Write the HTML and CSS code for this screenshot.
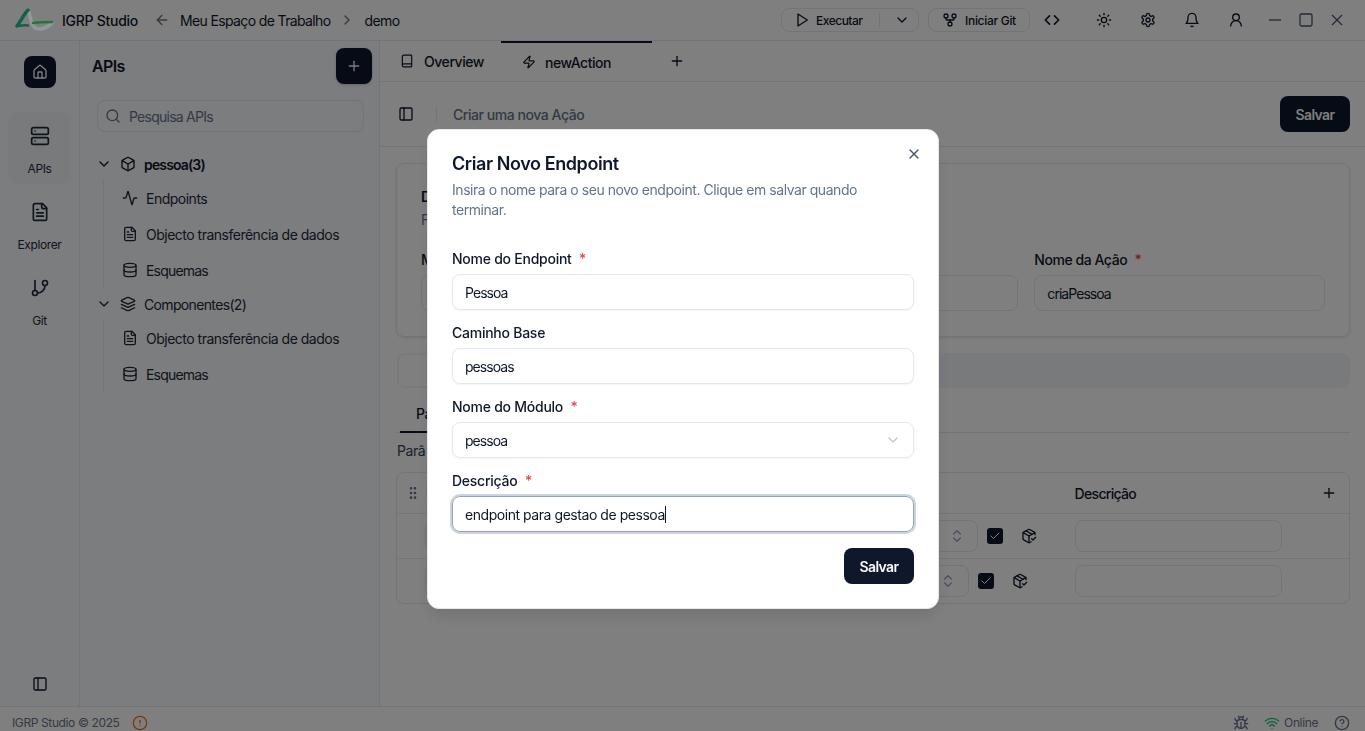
FILE: index.html
```html
<!DOCTYPE html>
<html lang="pt">
<head>
  <meta charset="UTF-8">
  <title>IGRP Studio</title>
  <link rel="stylesheet" href="styles.css">
</head>
<body>
  <svg class="sprite" xmlns="http://www.w3.org/2000/svg">
    <symbol id="i-house" viewBox="0 0 24 24"><path d="M15 21v-8a1 1 0 0 0-1-1h-4a1 1 0 0 0-1 1v8"/><path d="M3 10a2 2 0 0 1 .709-1.528l7-5.999a2 2 0 0 1 2.582 0l7 5.999A2 2 0 0 1 21 10v9a2 2 0 0 1-2 2H5a2 2 0 0 1-2-2z"/></symbol>
    <symbol id="i-server" viewBox="0 0 24 24"><rect x="2" y="2" width="20" height="8" rx="2"/><rect x="2" y="14" width="20" height="8" rx="2"/><path d="M6 6h.01"/><path d="M6 18h.01"/></symbol>
    <symbol id="i-file" viewBox="0 0 24 24"><path d="M15 2H6a2 2 0 0 0-2 2v16a2 2 0 0 0 2 2h12a2 2 0 0 0 2-2V7Z"/><path d="M14 2v4a2 2 0 0 0 2 2h4"/><path d="M10 9H8"/><path d="M16 13H8"/><path d="M16 17H8"/></symbol>
    <symbol id="i-branch" viewBox="0 0 24 24"><path d="M6 3v12"/><circle cx="18" cy="6" r="3"/><circle cx="6" cy="18" r="3"/><path d="M18 9a9 9 0 0 1-9 9"/></symbol>
    <symbol id="i-panel" viewBox="0 0 24 24"><rect x="3" y="3" width="18" height="18" rx="2"/><path d="M9 3v18"/></symbol>
    <symbol id="i-box" viewBox="0 0 24 24"><path d="M21 8a2 2 0 0 0-1-1.73l-7-4a2 2 0 0 0-2 0l-7 4A2 2 0 0 0 3 8v8a2 2 0 0 0 1 1.73l7 4a2 2 0 0 0 2 0l7-4A2 2 0 0 0 21 16Z"/><path d="m3.3 7 8.7 5 8.7-5"/><path d="M12 22V12"/></symbol>
    <symbol id="i-layers" viewBox="0 0 24 24"><path d="m12.83 2.18a2 2 0 0 0-1.66 0L2.6 6.08a1 1 0 0 0 0 1.83l8.58 3.91a2 2 0 0 0 1.66 0l8.58-3.9a1 1 0 0 0 0-1.83Z"/><path d="m22 17.65-9.17 4.16a2 2 0 0 1-1.66 0L2 17.65"/><path d="m22 12.65-9.17 4.16a2 2 0 0 1-1.66 0L2 12.65"/></symbol>
    <symbol id="i-activity" viewBox="0 0 24 24"><path d="M22 12h-2.48a2 2 0 0 0-1.93 1.46l-2.35 8.36a.25.25 0 0 1-.48 0L9.24 2.18a.25.25 0 0 0-.48 0l-2.35 8.36A2 2 0 0 1 4.49 12H2"/></symbol>
    <symbol id="i-database" viewBox="0 0 24 24"><ellipse cx="12" cy="5" rx="9" ry="3"/><path d="M3 5V19A9 3 0 0 0 21 19V5"/><path d="M3 12A9 3 0 0 0 21 12"/></symbol>
    <symbol id="i-search" viewBox="0 0 24 24"><circle cx="11" cy="11" r="8"/><path d="m21 21-4.3-4.3"/></symbol>
    <symbol id="i-down" viewBox="0 0 24 24"><path d="m6 9 6 6 6-6"/></symbol>
    <symbol id="i-right" viewBox="0 0 24 24"><path d="m9 18 6-6-6-6"/></symbol>
    <symbol id="i-back" viewBox="0 0 24 24"><path d="m12 19-7-7 7-7"/><path d="M19 12H5"/></symbol>
    <symbol id="i-plus" viewBox="0 0 24 24"><path d="M5 12h14"/><path d="M12 5v14"/></symbol>
    <symbol id="i-x" viewBox="0 0 24 24"><path d="M18 6 6 18"/><path d="m6 6 12 12"/></symbol>
    <symbol id="i-play" viewBox="0 0 24 24"><path d="M6 3 20 12 6 21Z"/></symbol>
    <symbol id="i-fork" viewBox="0 0 24 24"><circle cx="12" cy="18" r="3"/><circle cx="6" cy="6" r="3"/><circle cx="18" cy="6" r="3"/><path d="M18 9v2c0 .6-.4 1-1 1H7c-.6 0-1-.4-1-1V9"/><path d="M12 12v3"/></symbol>
    <symbol id="i-code" viewBox="0 0 24 24"><path d="m9 7-5 5 5 5"/><path d="m15 7 5 5-5 5"/></symbol>
    <symbol id="i-sun" viewBox="0 0 24 24"><circle cx="12" cy="12" r="4"/><path d="M12 2v2"/><path d="M12 20v2"/><path d="m4.93 4.93 1.41 1.41"/><path d="m17.66 17.66 1.41 1.41"/><path d="M2 12h2"/><path d="M20 12h2"/><path d="m6.34 17.66-1.41 1.41"/><path d="m19.07 4.93-1.41 1.41"/></symbol>
    <symbol id="i-gear" viewBox="0 0 24 24"><path d="M12.22 2h-.44a2 2 0 0 0-2 2v.18a2 2 0 0 1-1 1.73l-.43.25a2 2 0 0 1-2 0l-.15-.08a2 2 0 0 0-2.73.73l-.22.38a2 2 0 0 0 .73 2.73l.15.1a2 2 0 0 1 1 1.72v.51a2 2 0 0 1-1 1.74l-.15.09a2 2 0 0 0-.73 2.73l.22.38a2 2 0 0 0 2.73.73l.15-.08a2 2 0 0 1 2 0l.43.25a2 2 0 0 1 1 1.73V20a2 2 0 0 0 2 2h.44a2 2 0 0 0 2-2v-.18a2 2 0 0 1 1-1.73l.43-.25a2 2 0 0 1 2 0l.15.08a2 2 0 0 0 2.73-.73l.22-.39a2 2 0 0 0-.73-2.73l-.15-.08a2 2 0 0 1-1-1.74v-.5a2 2 0 0 1 1-1.74l.15-.09a2 2 0 0 0 .73-2.73l-.22-.38a2 2 0 0 0-2.73-.73l-.15.08a2 2 0 0 1-2 0l-.43-.25a2 2 0 0 1-1-1.73V4a2 2 0 0 0-2-2z"/><circle cx="12" cy="12" r="3"/></symbol>
    <symbol id="i-bell" viewBox="0 0 24 24"><path d="M6 8a6 6 0 0 1 12 0c0 7 3 9 3 9H3s3-2 3-9"/><path d="M10.3 21a1.94 1.94 0 0 0 3.4 0"/></symbol>
    <symbol id="i-user" viewBox="0 0 24 24"><circle cx="12" cy="8" r="5"/><path d="M20 21a8 8 0 0 0-16 0"/></symbol>
    <symbol id="i-book" viewBox="0 0 24 24"><path d="M4 19.5v-15A2.5 2.5 0 0 1 6.5 2H19a1 1 0 0 1 1 1v18a1 1 0 0 1-1 1H6.5a1 1 0 0 1 0-5H20"/></symbol>
    <symbol id="i-zap" viewBox="0 0 24 24"><path d="M4 14a1 1 0 0 1-.78-1.63l9.9-10.2a.5.5 0 0 1 .86.46l-1.92 6.02A1 1 0 0 0 13 10h7a1 1 0 0 1 .78 1.63l-9.9 10.2a.5.5 0 0 1-.86-.46l1.92-6.02A1 1 0 0 0 11 14z"/></symbol>
    <symbol id="i-updown" viewBox="0 0 24 24"><path d="m7 15 5 5 5-5"/><path d="m7 9 5-5 5 5"/></symbol>
    <symbol id="i-package" viewBox="0 0 24 24"><path d="m16 16 2 2 4-4"/><path d="M21 10V8a2 2 0 0 0-1-1.73l-7-4a2 2 0 0 0-2 0l-7 4A2 2 0 0 0 3 8v8a2 2 0 0 0 1 1.73l7 4a2 2 0 0 0 2 0l2-1.14"/><path d="m7.5 4.27 9 5.15"/><path d="M3.29 7 12 12l8.71-5"/><path d="M12 22V12"/></symbol>
    <symbol id="i-check" viewBox="0 0 24 24"><path d="M20 6 9 17l-5-5"/></symbol>
    <symbol id="i-grip" viewBox="0 0 24 24"><circle cx="9" cy="12" r="1"/><circle cx="9" cy="5" r="1"/><circle cx="9" cy="19" r="1"/><circle cx="15" cy="12" r="1"/><circle cx="15" cy="5" r="1"/><circle cx="15" cy="19" r="1"/></symbol>
    <symbol id="i-bug" viewBox="0 0 24 24"><path d="m8 2 1.88 1.88"/><path d="M14.12 3.88 16 2"/><path d="M9 7.13v-1a3.003 3.003 0 1 1 6 0v1"/><path d="M12 20c-3.3 0-6-2.7-6-6v-3a4 4 0 0 1 4-4h4a4 4 0 0 1 4 4v3c0 3.3-2.7 6-6 6"/><path d="M12 20v-9"/><path d="M6.53 9C4.6 8.8 3 7.1 3 5"/><path d="M6 13H2"/><path d="M3 21c0-2.1 1.7-3.9 3.8-4"/><path d="M20.97 5c0 2.1-1.6 3.8-3.5 4"/><path d="M22 13h-4"/><path d="M17.2 17c2.1.1 3.8 1.9 3.8 4"/></symbol>
    <symbol id="i-wifi" viewBox="0 0 24 24"><path d="M12 20h.01"/><path d="M2 8.82a15 15 0 0 1 20 0"/><path d="M5 12.859a10 10 0 0 1 14 0"/><path d="M8.5 16.429a5 5 0 0 1 7 0"/></symbol>
    <symbol id="i-help" viewBox="0 0 24 24"><circle cx="12" cy="12" r="10"/><path d="M9.09 9a3 3 0 0 1 5.83 1c0 2-3 3-3 3"/><path d="M12 17h.01"/></symbol>
    <symbol id="i-alert" viewBox="0 0 24 24"><circle cx="12" cy="12" r="10"/><path d="M12 8v4"/><path d="M12 16h.01"/></symbol>
  </svg>

  <div class="app">
    <header class="titlebar">
      <svg class="logo" viewBox="0 0 40 24" fill="none">
        <path d="M14 2C17 8 16 15 20 19C24 23 32 21 38 15" stroke="#94989c" stroke-width="3.500" stroke-linecap="round"/>
        <path d="M3 18C7 13 10 6 14 2" stroke="#14604a" stroke-width="3.500" stroke-linecap="round"/>
        <path d="M3 18C7 17.500 11 17 14 17.500" stroke="#14604a" stroke-width="2.500" stroke-linecap="round"/>
        <path d="M19 15C26 14 32 14 38 14" stroke="#1f7a3a" stroke-width="2.500" stroke-linecap="round"/>
      </svg>
      <span class="brand">IGRP Studio</span>
      <svg class="ic ic-16 muted back"><use href="#i-back"/></svg>
      <span class="crumb">Meu Espaço de Trabalho</span>
      <svg class="ic ic-16 muted sep"><use href="#i-right"/></svg>
      <span class="crumb">demo</span>

      <div class="title-actions">
        <div class="btn-outline run">
          <svg class="ic ic-16"><use href="#i-play"/></svg>
          <span>Executar</span>
          <i class="run-divider"></i>
          <svg class="ic ic-16 run-more"><use href="#i-down"/></svg>
        </div>
        <div class="btn-outline git">
          <svg class="ic ic-16"><use href="#i-fork"/></svg>
          <span>Iniciar Git</span>
        </div>
        <div class="tool-icons">
          <svg class="ic ic-20 code"><use href="#i-code"/></svg>
          <svg class="ic ic-16"><use href="#i-sun"/></svg>
          <svg class="ic ic-16"><use href="#i-gear"/></svg>
          <svg class="ic ic-16"><use href="#i-bell"/></svg>
          <svg class="ic ic-16"><use href="#i-user"/></svg>
        </div>
        <div class="window-btns">
          <svg class="win-ic" viewBox="0 0 16 16"><path d="M2 8h12"/></svg>
          <svg class="win-ic" viewBox="0 0 16 16"><rect x="2" y="2" width="12" height="12" rx="1.500"/></svg>
          <svg class="win-ic" viewBox="0 0 16 16"><path d="M3 3l10 10M13 3 3 13"/></svg>
        </div>
      </div>
    </header>

    <div class="workspace">
      <nav class="rail">
        <div class="home-btn"><svg class="ic ic-16"><use href="#i-house"/></svg></div>
        <div class="rail-item active"><svg class="ic ic-20"><use href="#i-server"/></svg><span>APIs</span></div>
        <div class="rail-item"><svg class="ic ic-20"><use href="#i-file"/></svg><span>Explorer</span></div>
        <div class="rail-item"><svg class="ic ic-20"><use href="#i-branch"/></svg><span>Git</span></div>
        <svg class="ic ic-16 rail-toggle"><use href="#i-panel"/></svg>
      </nav>

      <aside class="panel">
        <div class="panel-head">
          <h2>APIs</h2>
          <div class="btn-dark square"><svg class="ic ic-16"><use href="#i-plus"/></svg></div>
        </div>
        <div class="search">
          <svg class="ic ic-16 muted"><use href="#i-search"/></svg>
          <span>Pesquisa APIs</span>
        </div>
        <div class="tree">
          <div class="tree-parent strong">
            <svg class="ic ic-16"><use href="#i-down"/></svg>
            <svg class="ic ic-16"><use href="#i-box"/></svg>
            <span>pessoa(3)</span>
          </div>
          <div class="tree-children">
            <div class="tree-leaf"><svg class="ic ic-16"><use href="#i-activity"/></svg>Endpoints</div>
            <div class="tree-leaf"><svg class="ic ic-16"><use href="#i-file"/></svg>Objecto transferência de dados</div>
            <div class="tree-leaf tight"><svg class="ic ic-16"><use href="#i-database"/></svg>Esquemas</div>
          </div>
          <div class="tree-parent">
            <svg class="ic ic-16"><use href="#i-down"/></svg>
            <svg class="ic ic-16"><use href="#i-layers"/></svg>
            <span>Componentes(2)</span>
          </div>
          <div class="tree-children">
            <div class="tree-leaf"><svg class="ic ic-16"><use href="#i-file"/></svg>Objecto transferência de dados</div>
            <div class="tree-leaf tight"><svg class="ic ic-16"><use href="#i-database"/></svg>Esquemas</div>
          </div>
        </div>
      </aside>

      <main class="main">
        <div class="tabs">
          <div class="tab"><svg class="ic ic-14"><use href="#i-book"/></svg>Overview</div>
          <div class="tab current"><svg class="ic ic-14"><use href="#i-zap"/></svg>newAction</div>
          <svg class="ic ic-16 tab-add"><use href="#i-plus"/></svg>
        </div>
        <div class="toolbar">
          <svg class="ic ic-16"><use href="#i-panel"/></svg>
          <i class="toolbar-sep"></i>
          <span class="toolbar-title">Criar uma nova Ação</span>
          <div class="btn-dark save">Salvar</div>
        </div>

        <div class="content">
          <section class="card">
            <h3>D</h3>
            <p>F</p>
            <div class="card-grid">
              <div class="col">
                <div class="bg-label">M</div>
                <div class="bg-field"></div>
              </div>
              <div class="col">
                <div class="bg-label"></div>
                <div class="bg-field"></div>
              </div>
              <div class="col">
                <div class="bg-label">Nome da Ação <em>*</em></div>
                <div class="bg-field tight">criaPessoa</div>
              </div>
            </div>
          </section>

          <div class="segment"><div class="segment-pill"></div></div>

          <div class="subtabs"><div class="subtab">Pa</div></div>
          <div class="sub-note">Parâ</div>

          <section class="table">
            <div class="table-head">
              <svg class="ic ic-16 muted"><use href="#i-grip"/></svg>
              <span class="head-name">N</span>
              <span class="head-desc">Descrição</span>
              <svg class="ic ic-16"><use href="#i-plus"/></svg>
            </div>
            <div class="table-row">
              <div class="bg-field select"><svg class="ic ic-16 faint"><use href="#i-updown"/></svg></div>
              <div class="checkbox"><svg class="ic ic-12"><use href="#i-check"/></svg></div>
              <svg class="ic ic-16 pkg"><use href="#i-package"/></svg>
              <div class="bg-field desc"></div>
            </div>
            <div class="table-row narrow">
              <div class="bg-field select"><svg class="ic ic-16 faint"><use href="#i-updown"/></svg></div>
              <div class="checkbox"><svg class="ic ic-12"><use href="#i-check"/></svg></div>
              <svg class="ic ic-16 pkg"><use href="#i-package"/></svg>
              <div class="bg-field desc"></div>
            </div>
          </section>
        </div>
      </main>
    </div>

    <footer class="statusbar">
      <span>IGRP Studio © 2025</span>
      <svg class="ic ic-16 warn"><use href="#i-alert"/></svg>
      <div class="status-right">
        <svg class="ic ic-16"><use href="#i-bug"/></svg>
        <div class="online"><svg class="ic ic-16 ok"><use href="#i-wifi"/></svg>Online</div>
        <svg class="ic ic-16 help"><use href="#i-help"/></svg>
      </div>
    </footer>
  </div>

  <div class="overlay">
    <div class="dialog">
      <svg class="ic ic-16 dialog-close"><use href="#i-x"/></svg>
      <h2>Criar Novo Endpoint</h2>
      <p class="dialog-text">Insira o nome para o seu novo endpoint. Clique em salvar quando terminar.</p>

      <div class="form">
        <div class="form-row">
          <label>Nome do Endpoint <em>*</em></label>
          <div class="field tight">Pessoa</div>
        </div>
        <div class="form-row">
          <label>Caminho Base</label>
          <div class="field tight">pessoas</div>
        </div>
        <div class="form-row">
          <label>Nome do Módulo <em>*</em></label>
          <div class="field field-select tight">pessoa<svg class="ic ic-16 faint"><use href="#i-down"/></svg></div>
        </div>
        <div class="form-row">
          <label>Descrição <em>*</em></label>
          <div class="field focused">endpoint para gestao de pessoa<i class="caret"></i></div>
        </div>
      </div>

      <div class="dialog-foot"><div class="btn-dark save">Salvar</div></div>
    </div>
  </div>
</body>
</html>
```

FILE: styles.css
```css
* {
  box-sizing: border-box;
}

html, body {
  height: 100%;
  margin: 0;
  overflow: hidden;
}

body {
  font-family: "Inter", "Liberation Sans", sans-serif;
  font-size: 14px;
  letter-spacing: -0.45px;
  color: #0f172a;
  background: #fff;
}

h2, h3, p {
  margin: 0;
}

em {
  font-style: normal;
  color: #ef4444;
  margin-left: 4px;
}

.sprite {
  display: none;
}

.ic {
  flex: none;
  fill: none;
  stroke: currentColor;
  stroke-width: 2;
  stroke-linecap: round;
  stroke-linejoin: round;
}

.ic-12 { width: 12px; height: 12px; }
.ic-14 { width: 14px; height: 14px; }
.ic-16 { width: 16px; height: 16px; }
.ic-20 { width: 20px; height: 20px; }

.muted { color: #64748b; }
.faint { color: #94a3b8; }
.tight { letter-spacing: -0.95px; }

.app {
  height: 100%;
  display: flex;
  flex-direction: column;
}

/* title bar */
.titlebar {
  height: 41px;
  flex: none;
  display: flex;
  align-items: center;
  padding-left: 14px;
  border-bottom: 1px solid #e2e8f0;
}

/* the logo shows through the backdrop in the app */
.logo {
  position: relative;
  z-index: 1;
  width: 40px;
  height: 24px;
  flex: none;
}

.brand {
  margin-left: 8px;
  font-weight: 500;
  letter-spacing: -0.27px;
}

.back {
  margin-left: 16px;
}

.crumb {
  margin-left: 10px;
  letter-spacing: -0.63px;
}

.sep {
  margin-left: 8px;
}

.title-actions {
  margin-left: auto;
  display: flex;
  align-items: center;
}

.btn-outline {
  height: 24px;
  display: flex;
  align-items: center;
  border: 1px solid #e2e8f0;
  border-radius: 8px;
  font-size: 12px;
  font-weight: 500;
  letter-spacing: -0.5px;
}

.run {
  width: 138px;
  padding-left: 12px;
  gap: 6px;
}

.run-divider {
  width: 1px;
  height: 16px;
  margin-left: 11px;
  background: #e2e8f0;
}

.run-more {
  margin-left: 8px;
}

.git {
  width: 102px;
  margin-left: 9px;
  padding-left: 13px;
  gap: 7px;
  letter-spacing: -0.3px;
}

.tool-icons {
  display: flex;
  align-items: center;
  gap: 28px;
  margin-left: 14px;
}

.tool-icons .code {
  margin: 0 6px 0 -2px;
}

.window-btns {
  display: flex;
  gap: 15px;
  margin-left: 23px;
  margin-right: 20px;
}

.win-ic {
  width: 16px;
  height: 16px;
  fill: none;
  stroke: #475569;
  stroke-width: 1.300;
}

/* layout */
.workspace {
  flex: 1;
  min-height: 0;
  display: flex;
}

.rail {
  width: 80px;
  flex: none;
  display: flex;
  flex-direction: column;
  align-items: center;
  padding-top: 15px;
  background: #f8fafc;
  border-right: 1px solid #e2e8f0;
}

.home-btn {
  width: 32px;
  height: 32px;
  display: grid;
  place-items: center;
  margin-bottom: 24px;
  border-radius: 8px;
  color: #fff;
  background: #0f172a;
}

.rail-item {
  width: 63px;
  height: 72px;
  margin-bottom: 4px;
  padding-top: 14px;
  display: flex;
  flex-direction: column;
  align-items: center;
  gap: 15px;
  border-radius: 10px;
  font-size: 12px;
  line-height: 16px;
  letter-spacing: -0.38px;
  color: #1e293b;
}

.rail-item.active {
  background: #f1f5f9;
}

.rail-toggle {
  margin-top: auto;
  margin-bottom: 14px;
}

.panel {
  width: 300px;
  flex: none;
  padding: 7px 7px 0 12px;
  background: #f8fafc;
  border-right: 1px solid #e2e8f0;
}

.panel-head {
  display: flex;
  align-items: center;
  justify-content: space-between;
}

.panel-head h2 {
  font-size: 16px;
  font-weight: 600;
  letter-spacing: -0.6px;
}

.btn-dark {
  display: flex;
  align-items: center;
  justify-content: center;
  border-radius: 8px;
  color: #f8fafc;
  background: #0f172a;
  font-weight: 600;
  font-size: 14px;
  letter-spacing: -0.6px;
}

.square {
  width: 36px;
  height: 36px;
  box-shadow: 0 1px 3px rgba(0, 0, 0, .2);
}

.save {
  width: 70px;
  height: 36px;
}

.search {
  width: 267px;
  height: 32px;
  margin: 16px 0 0 5px;
  padding-left: 7px;
  display: flex;
  align-items: center;
  gap: 8px;
  border: 1px solid #e2e8f0;
  border-radius: 8px;
  letter-spacing: -0.75px;
  color: #64748b;
}

.tree {
  margin-top: 16px;
}

.tree-parent {
  height: 32px;
  display: flex;
  align-items: center;
  padding-left: 4px;
  gap: 8px;
  letter-spacing: -0.65px;
  color: #1e293b;
}

.tree-parent.strong {
  font-weight: 600;
  letter-spacing: -0.85px;
  color: #0f172a;
}

.tree-children {
  margin-left: 11px;
  padding-left: 18px;
  border-left: 1px solid #e2e8f0;
}

.tree-leaf {
  height: 36px;
  display: flex;
  align-items: center;
  gap: 8px;
  letter-spacing: -0.5px;
  color: #1e293b;
}

.tree-leaf.tight {
  letter-spacing: -0.8px;
}

/* main area */
.main {
  flex: 1;
  min-width: 0;
  display: flex;
  flex-direction: column;
}

.tabs {
  height: 41px;
  flex: none;
  display: flex;
  align-items: center;
  border-bottom: 1px solid #e2e8f0;
}

.tab {
  display: flex;
  align-items: center;
  gap: 10px;
  height: 100%;
  font-weight: 500;
  padding-left: 20px;
  width: 121px;
}

.tab.current {
  width: 151px;
  padding-left: 21px;
  gap: 9px;
  border-top: 2px solid #0f172a;
}

.tab-add {
  margin-left: 17px;
}

.toolbar {
  height: 65px;
  flex: none;
  display: flex;
  align-items: center;
  padding: 0 15px 0 18px;
  border-bottom: 1px solid #e2e8f0;
}

.toolbar-sep {
  width: 1px;
  height: 16px;
  margin: 0 16px 0 22px;
  background: #e2e8f0;
}

.toolbar-title {
  font-weight: 500;
  color: #64748b;
}

.toolbar .save {
  margin-left: auto;
}

.content {
  flex: 1;
  padding: 16px 15px 0 16px;
}

.card {
  height: 174px;
  padding: 23px 24px;
  border: 1px solid #e2e8f0;
  border-radius: 8px;
  box-shadow: 0 1px 3px rgba(0, 0, 0, .1);
}

.card h3 {
  font-size: 14px;
  font-weight: 600;
  line-height: 20px;
}

.card p {
  margin-top: 3px;
  color: #64748b;
  line-height: 20px;
}

.card-grid {
  margin-top: 20px;
  display: grid;
  grid-template-columns: repeat(3, 1fr);
  gap: 16px;
}

.bg-label {
  height: 20px;
  font-weight: 500;
  line-height: 20px;
  margin-bottom: 5px;
}

.bg-field {
  height: 36px;
  padding-left: 12px;
  display: flex;
  align-items: center;
  border: 1px solid #e2e8f0;
  border-radius: 8px;
}

.segment {
  height: 35px;
  margin: 16px 0 0 1px;
  padding: 2px;
  background: #f1f5f9;
  border-radius: 8px;
}

.segment-pill {
  width: 200px;
  height: 31px;
  background: #fff;
  border-radius: 6px;
}

.subtabs {
  height: 45px;
  border-bottom: 1px solid #e2e8f0;
}

.subtab {
  width: 120px;
  height: 45px;
  margin-left: 4px;
  padding: 16px 0 0 16px;
  font-weight: 500;
  line-height: 20px;
  border-bottom: 2px solid #0f172a;
}

.sub-note {
  margin: 8px 0 0 1px;
  line-height: 20px;
  color: #334155;
}

.table {
  margin-top: 11px;
  border: 1px solid #e2e8f0;
  border-radius: 8px;
}

.table-head {
  height: 41px;
  display: flex;
  align-items: center;
  padding: 0 12px 0 8px;
  font-weight: 500;
  border-bottom: 1px solid #e2e8f0;
}

.head-name {
  margin-left: 5px;
  color: #dc2626;
}

.head-desc {
  margin-left: auto;
  margin-right: 185px;
  letter-spacing: -0.7px;
}

.table-row {
  height: 45px;
  display: flex;
  align-items: center;
  padding: 0 67px 0 28px;
  gap: 9px;
  border-bottom: 1px solid #e2e8f0;
}

.table-row:last-child {
  height: 44px;
  border-bottom: 0;
}

.select {
  flex: 1;
  height: 32px;
  justify-content: flex-end;
  padding-right: 12px;
}

.checkbox {
  width: 16px;
  height: 16px;
  flex: none;
  display: grid;
  place-items: center;
  border-radius: 3px;
  color: #fff;
  background: #0f172a;
}

.pkg {
  margin: 0 29px 0 9px;
}

.table-row.narrow .pkg {
  margin-right: 38px;
}

.desc {
  width: 207px;
  flex: none;
  height: 32px;
}

/* status bar */
.statusbar {
  height: 25px;
  flex: none;
  display: flex;
  align-items: flex-start;
  padding: 8px 15px 0 12px;
  gap: 12px;
  font-size: 12px;
  line-height: 16px;
  letter-spacing: -0.38px;
  color: #64748b;
  border-top: 1px solid #e2e8f0;
}

.warn {
  color: #f97316;
}

.ok {
  color: #22c55e;
}

.status-right {
  margin-left: auto;
  display: flex;
  align-items: center;
  gap: 15px;
}

.online {
  display: flex;
  align-items: center;
  gap: 4px;
}

.help {
  margin-left: 1px;
}

/* modal */
.overlay {
  position: fixed;
  inset: 0;
  display: flex;
  justify-content: center;
  align-items: flex-start;
  padding: 129px 0 0 1px;
  background: rgba(0, 0, 0, .5);
}

.dialog {
  position: relative;
  width: 512px;
  padding: 24px;
  background: #fff;
  border: 1px solid #e2e8f0;
  border-radius: 12px;
  box-shadow: 0 10px 15px -3px rgba(0, 0, 0, .1);
}

.dialog-close {
  position: absolute;
  top: 16px;
  right: 16px;
  color: #475569;
}

.dialog h2 {
  font-size: 18px;
  font-weight: 600;
  line-height: 20px;
  letter-spacing: -0.42px;
}

.dialog-text {
  margin-top: 6px;
  color: #64748b;
  line-height: 20px;
}

.form {
  margin-top: 29px;
  display: flex;
  flex-direction: column;
  gap: 13px;
}

.form-row label {
  display: block;
  font-weight: 500;
  line-height: 20px;
  margin-bottom: 5px;
  letter-spacing: -0.25px;
}

.field {
  height: 36px;
  display: flex;
  align-items: center;
  padding: 0 12px;
  border: 1px solid #e2e8f0;
  border-radius: 8px;
  box-shadow: 0 1px 2px rgba(0, 0, 0, .05);
  white-space: pre;
}

.field-select {
  justify-content: space-between;
}

.field-select .ic {
  opacity: .6;
}

.focused {
  border-color: #94a3b8;
  box-shadow: 0 0 0 2px #cbd5e1;
}

.caret {
  width: 1px;
  height: 17px;
  background: #0f172a;
}

.dialog-foot {
  margin-top: 16px;
  display: flex;
  justify-content: flex-end;
}
```
